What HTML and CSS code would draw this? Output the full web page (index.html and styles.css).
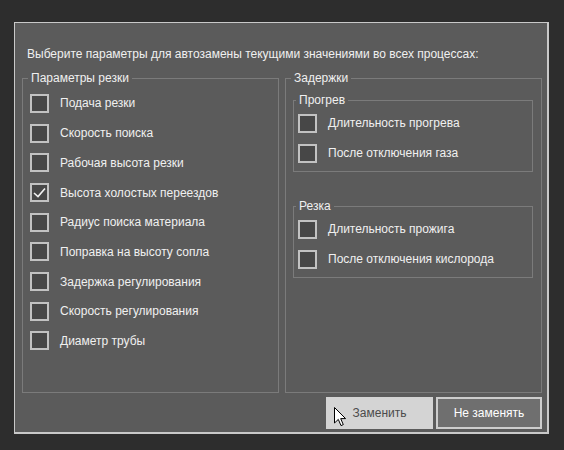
FILE: index.html
```html
<!DOCTYPE html>
<html lang="ru">

<head>
  <meta charset="UTF-8" />
  <meta name="viewport" content="width=device-width, initial-scale=1" />
  <title>Автозамена параметров</title>
  <link rel="stylesheet" href="styles.css">
</head>

<body>

  <div class="dialog">
    <p class="prompt">Выберите параметры для автозамены текущими значениями во всех процессах:</p>

    <div class="groups">
      <fieldset class="group cut">
        <legend>Параметры резки</legend>
        <label class="row"><span class="box"></span>Подача резки</label>
        <label class="row"><span class="box"></span>Скорость поиска</label>
        <label class="row"><span class="box"></span>Рабочая высота резки</label>
        <label class="row"><span class="box checked"><svg viewBox="0 0 15 15" width="15" height="15"><path d="M2 8 L6 11.5 L13 3.5" /></svg></span>Высота холостых переездов</label>
        <label class="row"><span class="box"></span>Радиус поиска материала</label>
        <label class="row"><span class="box"></span>Поправка на высоту сопла</label>
        <label class="row"><span class="box"></span>Задержка регулирования</label>
        <label class="row"><span class="box"></span>Скорость регулирования</label>
        <label class="row"><span class="box"></span>Диаметр трубы</label>
      </fieldset>

      <fieldset class="group delays">
        <legend>Задержки</legend>
        <fieldset class="group sub heat">
          <legend>Прогрев</legend>
          <label class="row"><span class="box"></span>Длительность прогрева</label>
          <label class="row"><span class="box"></span>После отключения газа</label>
        </fieldset>
        <fieldset class="group sub burn">
          <legend>Резка</legend>
          <label class="row"><span class="box"></span>Длительность прожига</label>
          <label class="row"><span class="box"></span>После отключения кислорода</label>
        </fieldset>
      </fieldset>
    </div>

    <div class="actions">
      <button class="btn replace">Заменить
        <svg class="pointer" viewBox="0 0 13 20" width="13" height="20"><path d="M0.5 0.5 L0.5 16 L4.3 12.4 L7 18.6 L9.3 17.6 L6.7 11.6 L11.6 11.6 Z" /></svg>
      </button>
      <button class="btn skip">Не заменять</button>
    </div>
  </div>

</body>

</html>
```

FILE: styles.css
```css
body {
  font-family: 'Liberation Sans', Arial, sans-serif;
  font-size: 12px;
  background: #2d2d2d;
  color: #f0f0f0;
  margin: 0;
  padding: 22px 15px 0 14px;
}

.dialog {
  box-sizing: border-box;
  width: 535px;
  height: 412px;
  background: #5b5b5b;
  border: 1px solid #c9c9c9;
  border-right-width: 2px;
  border-bottom-width: 2px;
  padding: 23px 5px 0 7px;
}

.prompt {
  margin: 0 0 8px 5px;
  line-height: 16px;
}

.groups {
  display: grid;
  grid-template-columns: 257px 257px;
  gap: 6px;
  height: 323px;
}

fieldset.group {
  margin: 0;
  min-width: 0;
  border: 1px solid #7b7b7b;
  padding: 2.6px 7px 0;
}

fieldset.group legend {
  line-height: 16px;
  padding: 0 3px;
  margin-left: -2px;
}

fieldset.group.delays {
  padding: 6px 8px 0 7px;
}

fieldset.group.sub {
  padding: 0 4px 3px;
}

fieldset.group.heat {
  margin-bottom: 26px;
}

.row {
  display: flex;
  align-items: center;
  gap: 11px;
  height: 29.7px;
}

.sub .row {
  height: 30px;
}

.box {
  box-sizing: border-box;
  width: 19px;
  height: 19px;
  flex: none;
  border: 2px solid #c2c2c2;
  background: #474747;
  display: flex;
  align-items: center;
  justify-content: center;
}

.box svg path {
  fill: none;
  stroke: #f2f2f2;
  stroke-width: 1.6;
}

.actions {
  display: flex;
  justify-content: flex-end;
  gap: 3px;
  margin-top: 3.5px;
}

.btn {
  position: relative;
  box-sizing: border-box;
  height: 32px;
  font-family: inherit;
  font-size: 12px;
  cursor: pointer;
}

.btn.replace {
  width: 107px;
  background: #d4d4d4;
  border: none;
  color: #4b4b4b;
}

.btn.skip {
  width: 106px;
  background: #6f6f6f;
  border: 2px solid #cdcdcd;
  color: #fff;
}

.pointer {
  position: absolute;
  left: 8px;
  top: 10px;
}

.pointer path {
  fill: #fff;
  stroke: #000;
  stroke-width: 1;
  stroke-linejoin: miter;
}
```
